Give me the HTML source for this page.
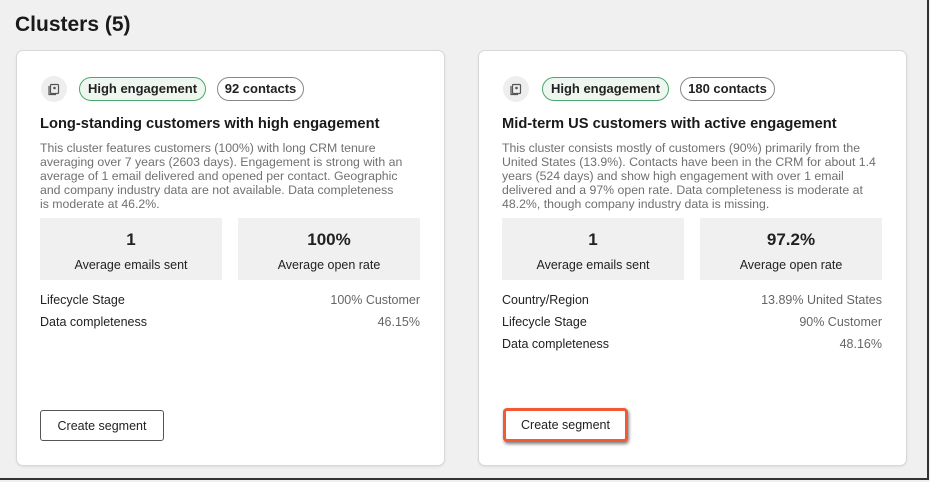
<!DOCTYPE html>
<html><head><style>
*{box-sizing:border-box;margin:0;padding:0}
body{width:930px;height:482px;background:#f0f0f0;font-family:"Liberation Sans",sans-serif;color:#222;position:relative;overflow:hidden}
.frame{position:absolute;left:0;top:0;width:929px;height:480px;border-right:2px solid #333;border-bottom:2px solid #333}
h1{position:absolute;left:15px;top:13px;font-size:21px;font-weight:bold;color:#1a1a1a}
.card{position:absolute;top:50px;width:429px;height:416px;background:#fff;border:1px solid #d8d8d8;border-radius:7px;box-shadow:0 1px 2px rgba(0,0,0,.08)}
.ic{position:absolute;left:24px;top:25px;width:26px;height:26px;border-radius:50%;background:#eee}
.pill{position:absolute;top:26px;height:24px;border-radius:12px;font-size:13px;font-weight:bold;line-height:22px;text-align:center}
.g{background:#eef6f0;border:1.5px solid #4aa86a}
.c{background:#fff;border:1.5px solid #888}
.t{position:absolute;left:23px;top:65px;font-size:14.7px;font-weight:bold;color:#1a1a1a}
.d{position:absolute;left:23px;top:90px;width:378px;font-size:12.3px;line-height:14px;color:#707070}
.box{position:absolute;top:167px;width:182px;height:62px;background:#f0f0f0;text-align:center}
.box b{display:block;margin-top:12px;font-size:17px}
.box span{display:block;margin-top:8px;font-size:12.5px}
.r{position:absolute;left:23px;width:380px;font-size:12.5px}
.r span{float:right;color:#666}
.btn{position:absolute;left:23px;top:359px;width:124px;height:31px;border:1px solid #555;border-radius:3px;font-size:12.5px;line-height:31px;text-align:center;background:#fff}
.hl{border:3px solid #f25a35;box-shadow:1px 2px 3px rgba(0,0,0,.5);border-radius:4px}
</style></head><body>
<div class="frame"></div>
<h1>Clusters (5)</h1>
<div class="card" style="left:16px">
<div class="ic"><svg width="26" height="26" viewBox="0 0 26 26"><rect x="9.5" y="8.5" width="8" height="9" rx="1" fill="none" stroke="#555" stroke-width="1.2"/><path d="M8 10v8.5h7" fill="none" stroke="#555" stroke-width="1.2"/><circle cx="13.5" cy="12" r="1.3" fill="#555"/></svg></div>
<div class="pill g" style="left:62px;width:127px">High engagement</div>
<div class="pill c" style="left:200px;width:87px">92 contacts</div>
<div class="t">Long-standing customers with high engagement</div>
<div class="d">This cluster features customers (100%) with long CRM tenure averaging over 7 years (2603 days). Engagement is strong with an average of 1 email delivered and opened per contact. Geographic<br>and company industry data are not available. Data completeness<br>is moderate at 46.2%.</div>
<div class="box" style="left:23px"><b>1</b><span>Average emails sent</span></div>
<div class="box" style="left:221px"><b>100%</b><span>Average open rate</span></div>
<div class="r" style="top:242px">Lifecycle Stage<span>100% Customer</span></div>
<div class="r" style="top:264px">Data completeness<span>46.15%</span></div>
<div class="btn">Create segment</div>
</div>
<div class="card" style="left:478px">
<div class="ic"><svg width="26" height="26" viewBox="0 0 26 26"><rect x="9.5" y="8.5" width="8" height="9" rx="1" fill="none" stroke="#555" stroke-width="1.2"/><path d="M8 10v8.5h7" fill="none" stroke="#555" stroke-width="1.2"/><circle cx="13.5" cy="12" r="1.3" fill="#555"/></svg></div>
<div class="pill g" style="left:63px;width:127px">High engagement</div>
<div class="pill c" style="left:201px;width:95px">180 contacts</div>
<div class="t">Mid-term US customers with active engagement</div>
<div class="d">This cluster consists mostly of customers (90%) primarily from the United States (13.9%). Contacts have been in the CRM for about 1.4 years (524 days) and show high engagement with over 1 email delivered and a 97% open rate. Data completeness is moderate at 48.2%, though company industry data is missing.</div>
<div class="box" style="left:23px"><b>1</b><span>Average emails sent</span></div>
<div class="box" style="left:221px"><b>97.2%</b><span>Average open rate</span></div>
<div class="r" style="top:242px">Country/Region<span>13.89% United States</span></div>
<div class="r" style="top:264px">Lifecycle Stage<span>90% Customer</span></div>
<div class="r" style="top:286px">Data completeness<span>48.16%</span></div>
<div class="btn hl" style="left:24px;top:357px;width:125px;height:34px;line-height:29px">Create segment</div>
</div>
</body></html>
